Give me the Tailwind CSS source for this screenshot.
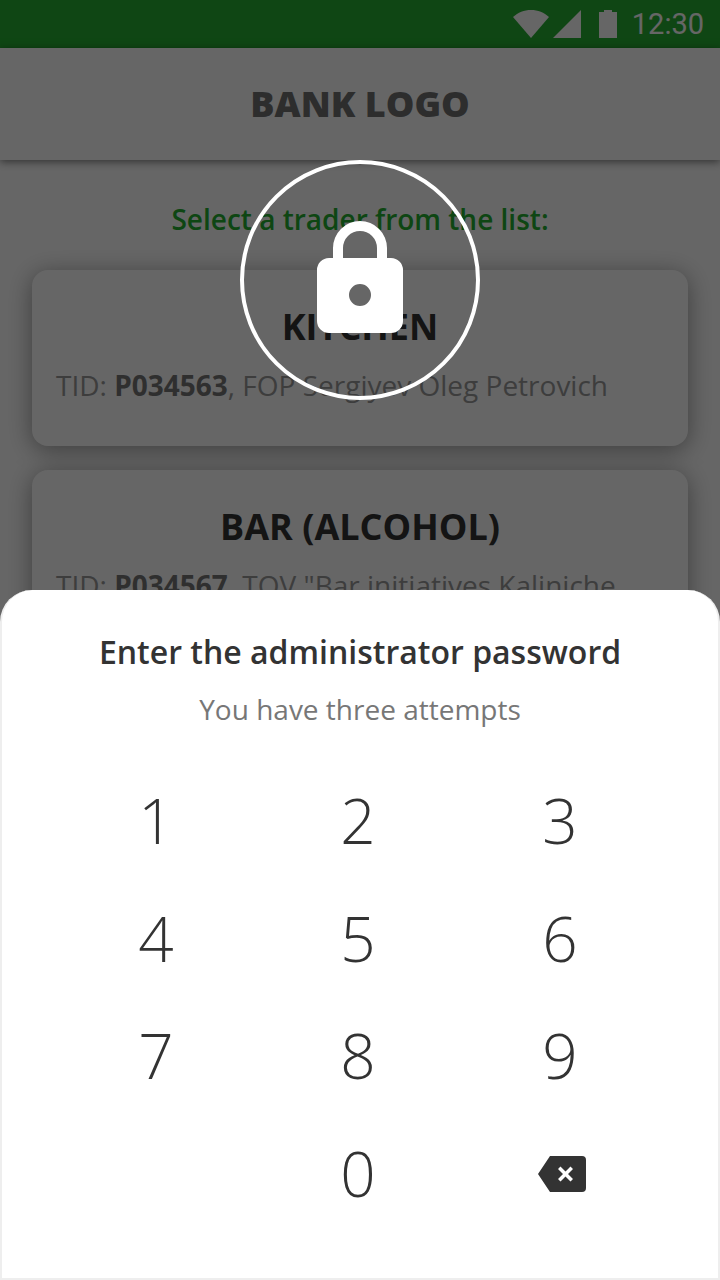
<!doctype html>
<html><head><meta charset="utf-8"><script src="https://cdn.jsdelivr.net/npm/@tailwindcss/browser@4"></script></head>
<body class="m-0">
<div class="relative w-[720px] h-[1280px] overflow-hidden bg-white font-['Open_Sans',sans-serif]">
  <div class="flex flex-col h-full">
    <div class="h-12 bg-[#26af32] flex items-center justify-end pr-4">
      <svg width="36" height="28" viewBox="0 0 36 28"><path d="M0 7C5 2.500 11 0 18 0s13 2.500 18 7L18 28z" fill="#fff"/></svg>
      <svg width="28" height="28" viewBox="0 0 28 28" class="ml-1"><path d="M0 28L28 0v28z" fill="#fff"/></svg>
      <svg width="18" height="28" viewBox="0 0 18 28" class="ml-[18px]"><path d="M0 2h5V0h8v2h5v26H0z" fill="#fff"/></svg>
      <span class="font-['Roboto',sans-serif] text-[29px] leading-none text-white ml-[15px]">12:30</span>
    </div>
    <div class="h-28 bg-white shadow-[0_2px_8px_rgba(0,0,0,0.5)] flex items-center justify-center relative">
      <span class="text-[36px] font-extrabold text-[#707070]">BANK LOGO</span>
    </div>
    <div class="flex flex-col px-8 pt-[39px] gap-6">
      <p class="text-center text-[28px] font-semibold leading-10 text-[#24b030] mb-[7px]">Select a trader from the list:</p>
      <div class="bg-white rounded-2xl h-[176px] shadow-[0_4px_24px_rgba(0,0,0,0.4)] px-6 pt-[34px] text-center">
        <p class="text-[36px] font-bold leading-[46px] text-[#333]">KITCHEN</p>
        <p class="text-[28px] leading-9 mt-[17px] text-left whitespace-nowrap text-[#999]">TID: <b class="text-[#777]">P034563</b>, FOP Sergiyev Oleg Petrovich</p>
      </div>
      <div class="bg-white rounded-2xl h-[176px] shadow-[0_4px_24px_rgba(0,0,0,0.4)] px-6 pt-[34px] text-center">
        <p class="text-[36px] font-bold leading-[46px] text-[#333]">BAR (ALCOHOL)</p>
        <p class="text-[28px] leading-9 mt-[17px] text-left whitespace-nowrap text-[#999]">TID: <b class="text-[#777]">P034567</b>, TOV "Bar initiatives Kaliniche</p>
      </div>
    </div>
  </div>
  <div class="absolute inset-0 bg-black/60"></div>
  <div class="absolute left-[240px] top-[160px] w-60 h-60 rounded-full border-4 border-white flex items-center justify-center">
    <svg width="86" height="112" viewBox="0 0 86 112" class="-mt-[6px]"><path fill="#fff" fill-rule="evenodd" d="M16 37V27a27 27 0 0 1 54 0v10h4a12 12 0 0 1 12 12v51a12 12 0 0 1-12 12H12a12 12 0 0 1-12-12V49a12 12 0 0 1 12-12zM26 37h34V27a17 17 0 0 0-34 0zM43 63a11 11 0 1 0 0 22 11 11 0 0 0 0-22z"/></svg>
  </div>
  <div class="absolute left-0 right-0 bottom-0 h-[690px] bg-white rounded-t-[32px] border-x-2 border-b-2 border-[#eeeeee] flex flex-col">
    <p class="text-center text-[32px] font-semibold leading-10 text-[#333] mt-[42px]">Enter the administrator password</p>
    <p class="text-center text-[28px] leading-9 text-[#777] mt-[19px]">You have three attempts</p>
    <div class="grid grid-cols-3 mt-[35px] pl-[53px] pr-[57px] auto-rows-[117.500px] text-[62px] font-light text-[#333] text-center items-center">
      <span>1</span><span>2</span><span>3</span>
      <span>4</span><span>5</span><span>6</span>
      <span>7</span><span>8</span><span>9</span>
      <span></span><span>0</span>
      <span class="flex justify-center pl-[4px] pt-[2px]">
        <svg width="48" height="36" viewBox="0 0 48 36"><path fill="#333" fill-rule="evenodd" d="M12 0h32a4 4 0 0 1 4 4v28a4 4 0 0 1-4 4H12L0 18zM20 13l5 5-5 5 2.500 2.500 5-5 5 5L35 23l-5-5 5-5-2.500-2.500-5 5-5-5z"/></svg>
      </span>
    </div>
  </div>
</div>
</body></html>
